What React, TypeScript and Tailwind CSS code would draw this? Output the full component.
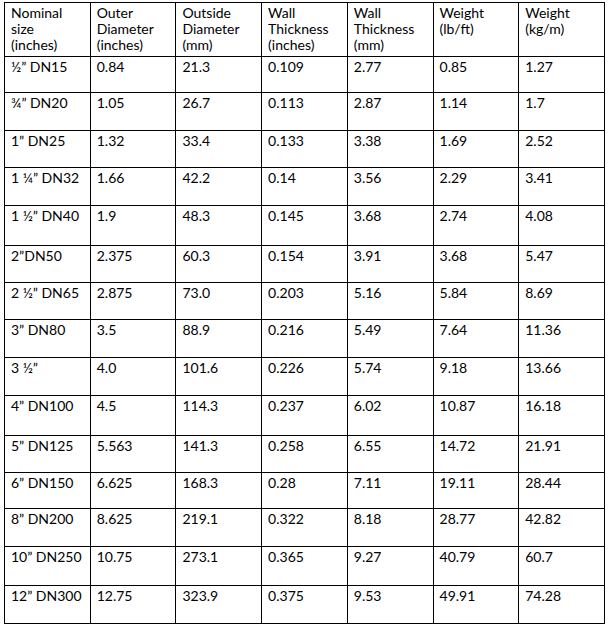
const headers = [
	['Nominal', 'size', '(inches)'],
	['Outer', 'Diameter', '(inches)'],
	['Outside', 'Diameter', '(mm)'],
	['Wall', 'Thickness', '(inches)'],
	['Wall', 'Thickness', '(mm)'],
	['Weight', '(lb/ft)'],
	['Weight', '(kg/m)'],
]

// row heights measured off the grid lines
const rows: { h: string; cells: string[] }[] = [
	{ h: 'h-[36px]', cells: ['½” DN15', '0.84', '21.3', '0.109', '2.77', '0.85', '1.27'] },
	{ h: 'h-[38px]', cells: ['¾” DN20', '1.05', '26.7', '0.113', '2.87', '1.14', '1.7'] },
	{ h: 'h-[37px]', cells: ['1” DN25', '1.32', '33.4', '0.133', '3.38', '1.69', '2.52'] },
	{ h: 'h-[38px]', cells: ['1 ¼” DN32', '1.66', '42.2', '0.14', '3.56', '2.29', '3.41'] },
	{ h: 'h-[40px]', cells: ['1 ½” DN40', '1.9', '48.3', '0.145', '3.68', '2.74', '4.08'] },
	{ h: 'h-[37px]', cells: ['2”DN50', '2.375', '60.3', '0.154', '3.91', '3.68', '5.47'] },
	{ h: 'h-[37px]', cells: ['2 ½” DN65', '2.875', '73.0', '0.203', '5.16', '5.84', '8.69'] },
	{ h: 'h-[38px]', cells: ['3” DN80', '3.5', '88.9', '0.216', '5.49', '7.64', '11.36'] },
	{ h: 'h-[38px]', cells: ['3 ½”', '4.0', '101.6', '0.226', '5.74', '9.18', '13.66'] },
	{ h: 'h-[40px]', cells: ['4” DN100', '4.5', '114.3', '0.237', '6.02', '10.87', '16.18'] },
	{ h: 'h-[37px]', cells: ['5” DN125', '5.563', '141.3', '0.258', '6.55', '14.72', '21.91'] },
	{ h: 'h-[36px]', cells: ['6” DN150', '6.625', '168.3', '0.28', '7.11', '19.11', '28.44'] },
	{ h: 'h-[38px]', cells: ['8” DN200', '8.625', '219.1', '0.322', '8.18', '28.77', '42.82'] },
	{ h: 'h-[39px]', cells: ['10” DN250', '10.75', '273.1', '0.365', '9.27', '40.79', '60.7'] },
	{ h: 'h-[38px]', cells: ['12” DN300', '12.75', '323.9', '0.375', '9.53', '49.91', '74.28'] },
]

export default function App() {
	return (
		<div className="w-[610px] h-[630px] bg-white pt-[2px] pl-[4px] font-['Lato',sans-serif] text-[14px] leading-[16px] text-black">
			<table className="border-collapse table-fixed w-[601px]">
				<thead>
					<tr className="h-[54px]">
						{headers.map((lines, i) => (
							<th
								key={i}
								className="border border-black align-top text-left font-normal px-[6px] pt-[2px]"
							>
								{lines.map((l) => (
									<div key={l}>{l}</div>
								))}
							</th>
						))}
					</tr>
				</thead>
				<tbody>
					{rows.map((row) => (
						<tr key={row.cells[0]} className={row.h}>
							{row.cells.map((c, j) => (
								<td key={j} className="border border-black align-top px-[6px] pt-[2px]">
									{c}
								</td>
							))}
						</tr>
					))}
				</tbody>
			</table>
		</div>
	)
}
